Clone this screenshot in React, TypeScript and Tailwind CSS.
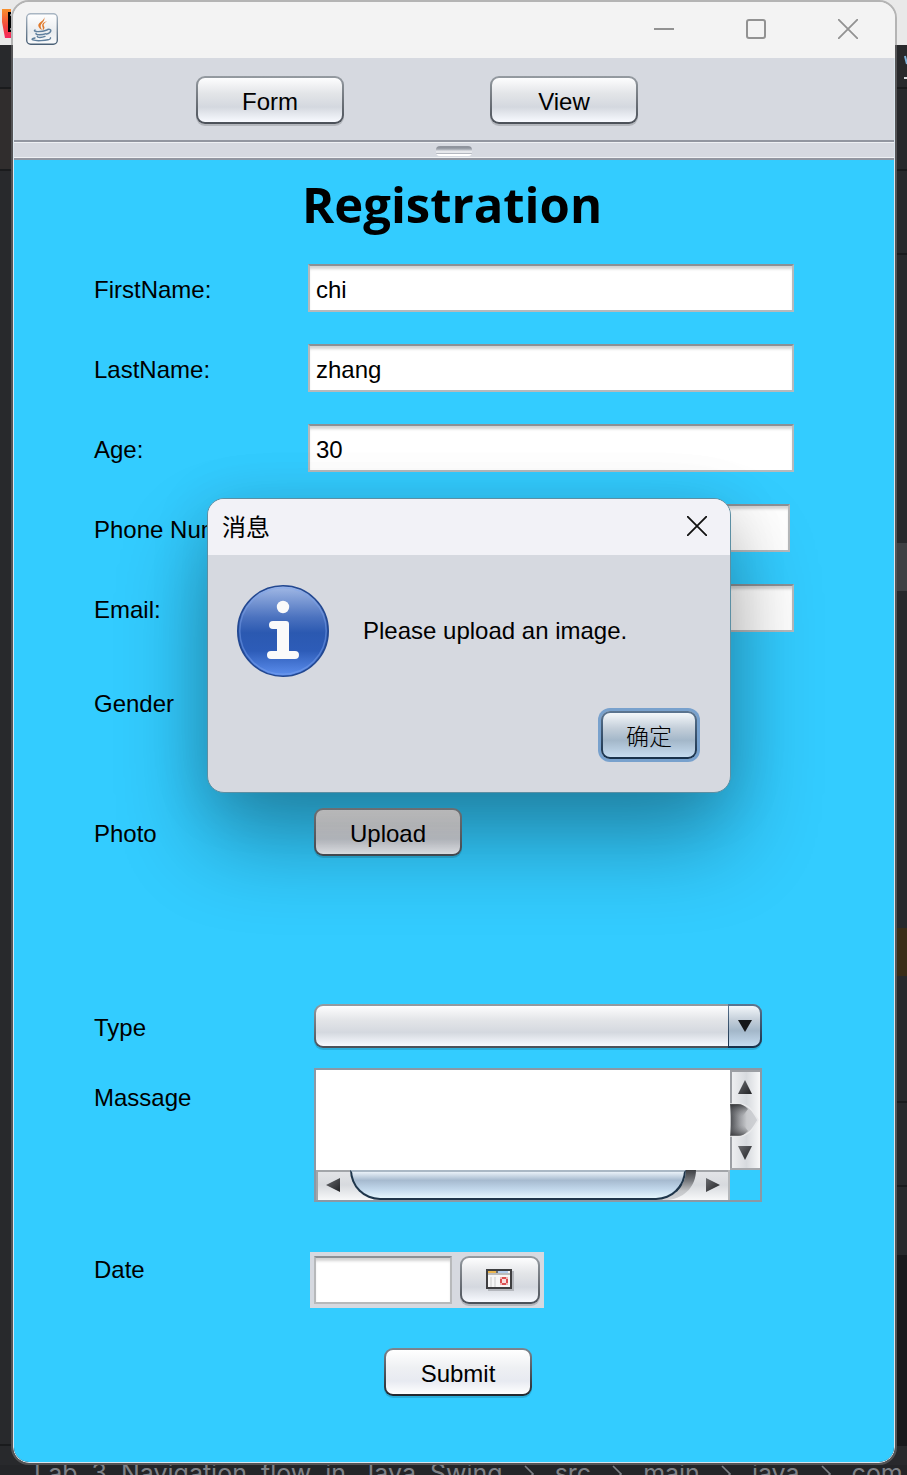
import { useState, type ButtonHTMLAttributes, type InputHTMLAttributes, type ReactNode } from "react";

const silver =
  "[background:linear-gradient(to_bottom,#fdfdfe_0%,#e3e5e8_35%,#d4d8df_66%,#f8faff_100%)_padding-box,linear-gradient(to_bottom,#959ba1,#4b5058)_border-box]";
const bright =
  "[background:linear-gradient(to_bottom,#ffffff_0%,#eef0f3_40%,#e7eaf1_70%,#ffffff_100%)_padding-box,linear-gradient(to_bottom,#7d858f,#22272d)_border-box]";
const blueSteel =
  "[background:linear-gradient(to_bottom,#f3f7fa_0%,#c3ced9_35%,#a3b7c9_62%,#c6dcf0_100%)_padding-box,linear-gradient(to_bottom,#5b7590,#17304a)_border-box]";

type NimbusButtonProps = ButtonHTMLAttributes<HTMLButtonElement> & { skin: string; children: ReactNode };

function NimbusButton({ skin, className = "w-[148px] pt-1", children, ...rest }: NimbusButtonProps) {
  return (
    <button
      type="button"
      className={`flex h-12 shrink-0 items-center justify-center rounded-[9px] border-2 border-transparent leading-7 ${skin} ${className}`}
      {...rest}
    >
      {children}
    </button>
  );
}

function TextField({ className = "w-full", ...rest }: InputHTMLAttributes<HTMLInputElement>) {
  return (
    <input
      type="text"
      className={`h-12 min-w-0 border-2 border-[#b7b9bb] border-t-[#8c9095] bg-white pt-1 pl-1.5 text-black shadow-[inset_0_4px_3px_-1px_#d3d3d3] outline-none ${className}`}
      {...rest}
    />
  );
}

type RowProps = { id: string; label: string; className?: string; labelClass?: string; children?: ReactNode };

function Row({ id, label, className = "", labelClass = "h-12 leading-[52px]", children }: RowProps) {
  return (
    <div className={`flex ${className}`}>
      <label htmlFor={id} className={`w-[214px] shrink-0 whitespace-nowrap ${labelClass}`}>
        {label}
      </label>
      <div className="flex min-w-0 flex-1">{children}</div>
    </div>
  );
}

function JavaIcon() {
  return (
    <svg width="32" height="32" viewBox="0 0 32 32" fill="none" aria-hidden="true">
      <defs>
        <linearGradient id="tile" x1="0" y1="0" x2="0" y2="1">
          <stop offset="0" stopColor="#fff" />
          <stop offset=".6" stopColor="#e9ecef" />
          <stop offset="1" stopColor="#fafbfc" />
        </linearGradient>
        <linearGradient id="tileEdge" x1="0" y1="0" x2="0" y2="1">
          <stop offset="0" stopColor="#a9b6c3" />
          <stop offset="1" stopColor="#4a6076" />
        </linearGradient>
      </defs>
      <rect x=".7" y=".7" width="30.6" height="30.6" rx="4" fill="url(#tile)" stroke="url(#tileEdge)" strokeWidth="1.4" />
      <path d="M17.800 3.500c2 4-6 5.500-5.500 9.200.2 2 2.200 3 3.400 4.600 0-2.200-1.400-3.200-1-4.900.7-2.500 5.400-4.900 3.100-8.900z" fill="#e07a2c" />
      <path d="M21.200 8c-3.600 1.200-5.600 2.800-5 5 .3 1.400 1.400 2.200.2 4.500 2.700-1.600 2.400-3.200 1.400-4.700-.9-1.500.9-3.100 3.400-4.800z" fill="#e07a2c" />
      <g stroke="#5f7f9d" strokeWidth="1.400" strokeLinecap="round">
        <path d="M9 17c-3 2 6.500 2.200 12 0" />
        <path d="M21.500 16.500c5-1.200 4.200 3.500-1 4.600" />
        <path d="M10 20.200c-.8 2 6 2 10 .4" />
        <path d="M11.300 23.200c-.4 1.700 4.700 1.600 7.700.2" />
        <path d="M9 25c-6.500 1.300-1 3 6 2.600 5.500-.2 10-1 9.500-2.800" />
      </g>
    </svg>
  );
}

function InfoIcon() {
  return (
    <svg className="shrink-0" width="92" height="92" viewBox="0 0 92 92" aria-hidden="true">
      <defs>
        <linearGradient id="info" x1="0" y1="0" x2="0" y2="1">
          <stop offset="0" stopColor="#a3bae6" />
          <stop offset=".35" stopColor="#4b72bf" />
          <stop offset=".52" stopColor="#2b59b1" />
          <stop offset=".72" stopColor="#2d5cb8" />
          <stop offset="1" stopColor="#5d8fee" />
        </linearGradient>
      </defs>
      <circle cx="46" cy="46" r="45.200" fill="url(#info)" stroke="#234891" strokeWidth="1.600" />
      <circle cx="46" cy="46" r="43.200" fill="none" stroke="#7ea3ee" strokeOpacity=".45" strokeWidth="1.500" />
      <circle cx="46" cy="22" r="6.200" fill="#fafafa" />
      <path
        d="M36 36H49a3 3 0 0 1 3 3V66H58a4 4 0 0 1 0 8H34a4 4 0 0 1 0-8H40V44H36a4 4 0 0 1 0-8z"
        fill="#fafafa"
      />
    </svg>
  );
}

function CalendarIcon() {
  return (
    <svg width="28" height="22" viewBox="0 0 28 22" shapeRendering="crispEdges" aria-hidden="true">
      <path d="M2 2H28V22H2z" fill="#b4b7bd" />
      <path d="M0 0H26V20H0z" fill="#3e3e40" />
      <path d="M2 2H24V18H2z" fill="#f6f6f6" />
      <path d="M2 2H10V4H2z" fill="#eab54e" />
      <path d="M10 2H12V4H10z" fill="#6d6d6d" />
      <path d="M12 2H22V4H12z" fill="#b4cdee" />
      <path d="M2 4H24V6H2z" fill="#bcbcbc" />
      <path d="M4 8H6V18H4zM8 8H10V18H8z" fill="#e0e0e0" />
      <path d="M14 8H22V16H14z" fill="#f3b1b1" />
      <path d="M16 8H20V10H16zM16 14H20V16H16zM14 10H16V14H14zM20 10H22V14H20z" fill="#d94f52" />
      <path d="M16 10H20V14H16z" fill="#f7dede" />
    </svg>
  );
}

function ScrollPane() {
  return (
    <div className="mr-8 ml-1.5 grid flex-1 grid-cols-[1fr_30px] grid-rows-[100px_30px] border-2 border-[#8b98a5]">
      <textarea id="message" className="block h-full w-full resize-none bg-white p-1 outline-none" />
      <svg width="30" height="100" viewBox="0 0 30 100" aria-hidden="true">
        <defs>
          <linearGradient id="track" x1="0" y1="0" x2="1" y2="0">
            <stop offset="0" stopColor="#f0f1f3" />
            <stop offset=".55" stopColor="#d7dade" />
            <stop offset="1" stopColor="#f7f8f9" />
          </linearGradient>
          <linearGradient id="hole" x1="0" y1="0" x2="1" y2="0">
            <stop offset="0" stopColor="#4b4d51" />
            <stop offset=".35" stopColor="#9a9ca0" />
            <stop offset=".6" stopColor="#c8cacd" />
            <stop offset="1" stopColor="#d0d2d6" />
          </linearGradient>
          <linearGradient id="holeShade" x1="0" y1="0" x2="0" y2="1">
            <stop offset="0" stopColor="#27282a" stopOpacity=".8" />
            <stop offset=".4" stopColor="#808286" stopOpacity="0" />
            <stop offset=".65" stopColor="#808286" stopOpacity="0" />
            <stop offset="1" stopColor="#27282a" stopOpacity=".65" />
          </linearGradient>
          <linearGradient id="gap" x1="0" y1="0" x2="0" y2="1">
            <stop offset="0" stopColor="#3c3e42" />
            <stop offset=".35" stopColor="#77797d" />
            <stop offset=".7" stopColor="#c3c5c8" />
            <stop offset="1" stopColor="#d4d6d9" />
          </linearGradient>
          <linearGradient id="arrow" x1="0" y1="0" x2="1" y2="1">
            <stop offset="0" stopColor="#6a6c70" />
            <stop offset="1" stopColor="#202124" />
          </linearGradient>
        </defs>
        <path d="M0 0H30V100H0z" fill="url(#track)" />
        <path d="M1 100V1H30" fill="none" stroke="#9c9fa4" strokeWidth="2" />
        <path d="M0 99H30" stroke="#a5a8ac" strokeWidth="2" />
        <path d="M15 10L22 24H8z" fill="url(#arrow)" />
        <path d="M0 34H10C20 35 24 43 28 50C24 57 20 65 10 66H0z" fill="url(#hole)" stroke="#e9eaec" strokeWidth="1.500" />
        <path d="M0 34H8C12 34 15 36 18 39L10 50L18 61C15 64 12 66 8 66H0z" fill="url(#holeShade)" />
        <path d="M8 76H22L15 90z" fill="url(#arrow)" />
      </svg>
      <div className="flex bg-[linear-gradient(to_bottom,#e4e5e8,#d7dade_50%,#f7f8f9)]">
        <svg className="shrink-0" width="34" height="30" viewBox="0 0 34 30" aria-hidden="true">
          <path d="M1 30V1H34" fill="none" stroke="#a2a5a9" strokeWidth="2" />
          <path d="M10 15L24 8V22z" fill="url(#arrow)" />
        </svg>
        <div className="relative flex-1 overflow-hidden rounded-b-[30px] border-2 border-t-2 border-[#1f364b] border-t-[#aab8c5] bg-[linear-gradient(to_bottom,#e9f1f8_0%,#a6bacf_32%,#c0d6ea_65%,#e5f6fd_100%)]" />
        <svg className="-ml-7 shrink-0" width="72" height="30" viewBox="0 0 72 30" aria-hidden="true">
          <path d="M0 30C17 28 28 15 28 0H38C38 15 28 28 10 30z" fill="url(#gap)" />
          <path d="M38 1H72" stroke="#a2a5a9" strokeWidth="2" />
          <path d="M71 0V30" stroke="#b5b8bb" strokeWidth="2" />
          <path d="M48 8L62 15L48 22z" fill="url(#arrow)" />
        </svg>
      </div>
    </div>
  );
}

function LeftStrip() {
  return (
    <div className="flex flex-col overflow-hidden" aria-hidden="true">
      <div className="h-[45px] pt-2 pl-0.5">
        <svg width="20" height="31" viewBox="0 0 20 31">
          <defs>
            <linearGradient id="logo" x1="0" y1="0" x2="0" y2="1">
              <stop offset="0" stopColor="#f7902b" />
              <stop offset=".6" stopColor="#f4453e" />
              <stop offset="1" stopColor="#f5265f" />
            </linearGradient>
          </defs>
          <path d="M0 1H12V30H3L0 14z" fill="url(#logo)" />
          <path d="M6 4H20V24H6z" fill="#000" />
          <path d="M8 7H12M8 21H12" stroke="#fff" strokeWidth="1" />
        </svg>
      </div>
      <div className="h-[44px] border-b-2 border-[#1a1b1d]" />
      <div className="h-[82px] border-b-2 border-[#1a1b1d] bg-[#302d2d]" />
      <div className="h-[1275px] border-b-2 border-[#1a1b1d]" />
    </div>
  );
}

function RightStrip() {
  return (
    <div className="flex flex-col" aria-hidden="true">
      <div className="h-[45px]" />
      <div className="h-[44px] border-b-2 border-[#1a1b1d]">
        <svg width="10" height="40" viewBox="0 0 10 40">
          <path d="M8 11L10 19" stroke="#7fb4dc" strokeWidth="2" />
          <path d="M7 33H10" stroke="#d8dade" strokeWidth="2" />
        </svg>
      </div>
      <div className="h-[82px] border-b-2 border-[#1a1b1d]" />
      <div className="h-[84px] border-b-2 border-[#1a1b1d]" />
      <div className="h-[288px]" />
      <div className="h-12 bg-[#3f4043]" />
      <div className="h-[337px]" />
      <div className="h-12 bg-[#3b2d18]" />
      <div className="h-[127px] border-b-2 border-[#1a1b1d]" />
      <div className="h-[84px] border-b-2 border-[#1a1b1d]" />
      <div className="h-[68px]" />
      <div className="h-[191px] bg-[#19191c]" />
    </div>
  );
}

function Crumb({ children }: { children: string }) {
  return (
    <>
      <svg className="shrink-0" width="10" height="18" viewBox="0 0 10 18" fill="none" aria-hidden="true">
        <path d="M1 1L9 9L1 17" stroke="#7e8187" strokeWidth="1.600" />
      </svg>
      <span>{children}</span>
    </>
  );
}

export default function App() {
  const [dialogOpen, setDialogOpen] = useState(true);
  const projectWords = ["Lab", "3", "Navigation", "flow", "in", "Java", "Swing"];

  return (
    <div className="relative min-h-screen bg-[linear-gradient(to_bottom,#e9e9e9_45px,#28292c_45px)] font-['Liberation_Sans','Noto_Sans_CJK_SC',sans-serif] text-2xl text-black">
      <div className="grid grid-cols-[11px_minmax(0,1fr)_10px]">
        <LeftStrip />
        <main className="overflow-hidden rounded-[18px] border-2 border-[#80808080]">
          <header className="flex h-14 items-center bg-[#f3f3f3] pr-px pb-0.5 pl-[13px] text-[#929292]">
            <JavaIcon />
            <div className="ml-auto flex">
              <button type="button" aria-label="Minimize" className="flex h-13 w-[92px] items-center justify-center">
                <svg width="20" height="20" viewBox="0 0 20 20" aria-hidden="true">
                  <path d="M0 10H20" stroke="currentColor" strokeWidth="2" />
                </svg>
              </button>
              <button type="button" aria-label="Maximize" className="flex h-13 w-[92px] items-center justify-center">
                <svg width="20" height="20" viewBox="0 0 20 20" fill="none" aria-hidden="true">
                  <rect x="1" y="1" width="18" height="18" rx="2" stroke="currentColor" strokeWidth="2" />
                </svg>
              </button>
              <button type="button" aria-label="Close" className="flex h-13 w-[92px] items-center justify-center">
                <svg width="20" height="20" viewBox="0 0 20 20" aria-hidden="true">
                  <path d="M0 0L20 20M20 0L0 20" stroke="currentColor" strokeWidth="1.800" />
                </svg>
              </button>
            </div>
          </header>

          <div className="overflow-hidden rounded-b-[16px] border-x border-b border-[#dce6ee]">
            <nav className="flex h-[82px] gap-[146px] bg-[#d6d9e0] pt-[18px] pl-[182px]">
              <NimbusButton skin={`${silver} shadow-[0_2px_0_#b3b6bc]`}>Form</NimbusButton>
              <NimbusButton skin={`${silver} shadow-[0_2px_0_#b3b6bc]`}>View</NimbusButton>
            </nav>
            <div className="flex h-5 justify-center border-y-2 border-[#9296a0] bg-[#d6d9e0] shadow-[inset_0_1px_0_#eef0f3,inset_0_-1px_0_#eef0f3]">
              <div className="mt-1 h-2.5 w-9 rounded-[4px] bg-[linear-gradient(to_bottom,#8f949d_0px,#8f949d_2px,#b9bdc5_4px,#e6e8ec_5px,#e6e8ec_7px,#b4b8c0_7px,#b4b8c0_8px,#ffffff_8px)]" />
            </div>

            <form className="bg-[#33ccff] pt-3 pb-[66px]" onSubmit={(e) => e.preventDefault()}>
              <h1 className="mb-7 pr-1 text-center font-['Open_Sans',sans-serif] text-[49px] leading-[64px] font-bold">
                Registration
              </h1>
              <div className="pr-[100px] pl-20">
                <div className="flex flex-col gap-8">
                  <Row id="first" label="FirstName:">
                    <TextField id="first" defaultValue="chi" />
                  </Row>
                  <Row id="last" label="LastName:">
                    <TextField id="last" defaultValue="zhang" />
                  </Row>
                  <Row id="age" label="Age:">
                    <TextField id="age" defaultValue="30" />
                  </Row>
                  <Row id="phone" label="Phone Number:">
                    <TextField id="phone" className="mr-1 flex-1" />
                  </Row>
                  <Row id="email" label="Email:">
                    <TextField id="email" />
                  </Row>
                </div>
                <div className="mt-12 h-12 leading-12">Gender</div>
                <Row id="photo" label="Photo" className="mt-20">
                  <NimbusButton id="photo" skin={`${silver} shadow-[0_2px_0_#00000026]`} className="ml-1.5 w-[148px] pt-1">
                    Upload
                  </NimbusButton>
                </Row>
                <Row id="type" label="Type" className="mt-[148px]" labelClass="h-12 leading-12">
                  <div className="relative mr-8 ml-1.5 h-11 flex-1">
                    <select
                      id="type"
                      className={`h-11 w-full appearance-none rounded-[9px] border-2 border-transparent pl-3 shadow-[0_2px_0_#00000026] outline-none ${silver}`}
                    >
                      <option value=""></option>
                    </select>
                    <span
                      className={`pointer-events-none absolute top-0 right-0 flex h-11 w-[34px] items-center justify-center rounded-r-[9px] border-y-2 border-r-2 border-l border-transparent ${blueSteel}`}
                    >
                      <svg width="14" height="12" viewBox="0 0 14 12" aria-hidden="true">
                        <path d="M0 0H14L7 12z" fill="#161719" />
                      </svg>
                    </span>
                  </div>
                </Row>
                <Row id="message" label="Massage" className="mt-4" labelClass="h-15 leading-[60px]">
                  <ScrollPane />
                </Row>
                <Row id="date" label="Date" className="mt-[50px]" labelClass="h-9 leading-9">
                  <div className="ml-0.5 flex gap-2 bg-[#d6d9e0] p-1">
                    <TextField id="date" className="w-[138px]" />
                    <NimbusButton
                      skin={`${silver} shadow-[0_2px_0_#b3b6bc]`}
                      className="w-20"
                      aria-label="Choose date"
                    >
                      <CalendarIcon />
                    </NimbusButton>
                  </div>
                </Row>
                <div className="mt-10 pl-[290px]">
                  <NimbusButton type="submit" skin={`${bright} shadow-[0_2px_0_#00000026]`}>
                    Submit
                  </NimbusButton>
                </div>
              </div>
            </form>
          </div>
        </main>
        <RightStrip />
      </div>

      <footer className="flex h-2.5 items-start gap-[21px] overflow-hidden bg-[#242528] pl-[34px] font-['Inter',sans-serif] text-[25px] leading-4 whitespace-nowrap text-[#7e8187]">
        <span className="flex gap-3.5">
          {projectWords.map((word) => (
            <span key={word}>{word}</span>
          ))}
        </span>
        <Crumb>src</Crumb>
        <Crumb>main</Crumb>
        <Crumb>java</Crumb>
        <Crumb>com</Crumb>
      </footer>

      {dialogOpen && (
        <section
          role="dialog"
          aria-labelledby="dialog-title"
          className="absolute top-[498px] left-[207px] w-[524px] overflow-hidden rounded-[17px] border border-[#5c8fa3] bg-[#d6d9e0] shadow-[0_48px_90px_rgba(0,0,0,0.32),0_8px_60px_rgba(0,0,0,0.12)]"
        >
          <header className="flex h-14 items-center justify-between bg-[#f2f2f7] pb-0.5 pl-3.5">
            <h2 id="dialog-title" className="font-['Noto_Sans_CJK_SC',sans-serif] text-2xl leading-8 font-normal">
              消息
            </h2>
            <button
              type="button"
              aria-label="Close dialog"
              className="flex h-13 w-[66px] items-center justify-center"
              onClick={() => setDialogOpen(false)}
            >
              <svg width="20" height="20" viewBox="0 0 20 20" aria-hidden="true">
                <path d="M0 0L20 20M20 0L0 20" stroke="#111" strokeWidth="1.800" />
              </svg>
            </button>
          </header>
          <div className="flex items-center gap-[34px] pt-[30px] pl-[29px]">
            <InfoIcon />
            <p>Please upload an image.</p>
          </div>
          <div className="flex justify-end pt-[34px] pr-[33px] pb-[33px]">
            <NimbusButton
              skin={`${blueSteel} shadow-[0_0_0_3px_#78a1cd]`}
              className="w-24 font-['Noto_Sans_CJK_SC',sans-serif] text-[23px] font-light"
              onClick={() => setDialogOpen(false)}
            >
              确定
            </NimbusButton>
          </div>
        </section>
      )}
    </div>
  );
}
